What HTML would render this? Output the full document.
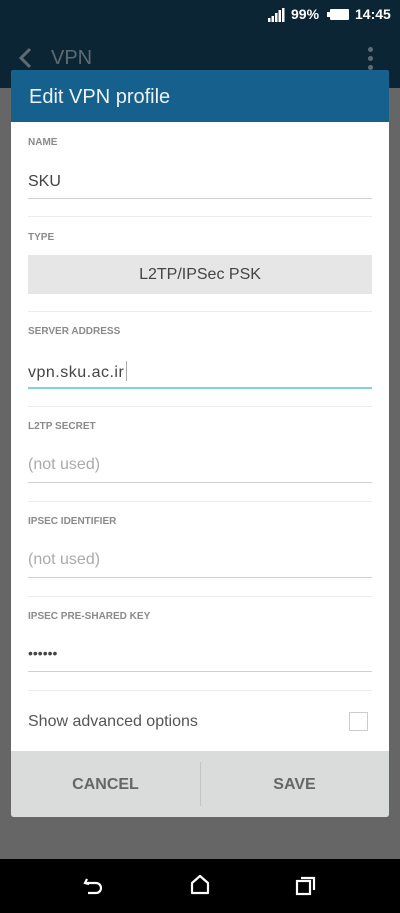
<!DOCTYPE html>
<html><head><meta charset="utf-8"><style>
*{margin:0;padding:0;box-sizing:border-box}
body{width:400px;height:913px;position:relative;overflow:hidden;background:#666;font-family:"Liberation Sans",sans-serif}
.top{position:absolute;left:0;top:0;width:400px;height:88px;background:#0b2535}
.nav{position:absolute;left:0;top:859px;width:400px;height:54px;background:#000}
.dlg{position:absolute;left:11px;top:70px;width:378px;height:747px;background:#fff;border-radius:3px;overflow:hidden}
.hd{height:52px;background:#15608d;color:#eef3f6;font-size:20px;line-height:54px;padding-left:18px}
.lbl{position:absolute;left:17px;font-size:10px;font-weight:bold;color:#8a8a8a}
.val{position:absolute;left:17px;font-size:16px;color:#444}
.ul{position:absolute;left:17px;width:344px;height:1px;background:#d0d0d0}
.dv{position:absolute;left:17px;width:344px;height:1px;background:#ececec}
.abs{position:absolute}
</style></head><body>
<div class="top">
<div class="abs" style="left:268px;top:8px;width:17px;height:14px">
<svg width="17" height="14"><rect x="0" y="10" width="2.5" height="4" fill="#fff"/><rect x="3.5" y="8" width="2.5" height="6" fill="#fff"/><rect x="7" y="5" width="2.5" height="9" fill="#fff"/><rect x="10.5" y="2" width="2.5" height="12" fill="#fff"/><rect x="14" y="0" width="2.5" height="14" fill="#fff"/></svg></div>
<div class="abs" style="left:291px;top:6px;color:#fff;font-size:14px;font-weight:bold">99%</div>
<div class="abs" style="left:330px;top:9px;width:19px;height:11px;border:1.5px solid #fff;background:#fff;border-radius:1px"></div>
<div class="abs" style="left:327px;top:12px;width:3px;height:5px;background:#fff"></div>
<div class="abs" style="left:355px;top:6px;color:#fff;font-size:14px;font-weight:bold">14:45</div>
<svg class="abs" style="left:18px;top:47px" width="14" height="22"><path d="M12 2 L3 11 L12 20" stroke="#5e6b73" stroke-width="3" fill="none"/></svg>
<div class="abs" style="left:51px;top:47px;color:#5e6b73;font-size:20px">VPN</div>
<div class="abs" style="left:368px;top:47px;width:5px;height:5px;border-radius:50%;background:#5e6b73;box-shadow:0 9px 0 #5e6b73,0 18px 0 #5e6b73"></div>
</div>
<div class="dlg">
<div class="hd">Edit VPN profile</div>
<div class="lbl" style="top:67px">NAME</div>
<div class="val" style="top:103px">SKU</div>
<div class="ul" style="top:128px"></div>
<div class="dv" style="top:146px"></div>
<div class="lbl" style="top:162px">TYPE</div>
<div class="abs" style="left:17px;top:185px;width:344px;height:39px;background:#e6e6e6;color:#444;font-size:16px;text-align:center;line-height:40px">L2TP/IPSec PSK</div>
<div class="dv" style="top:241px"></div>
<div class="lbl" style="top:256px">SERVER ADDRESS</div>
<div class="val" style="top:291px;letter-spacing:0.5px">vpn.sku.ac.ir<span style="display:inline-block;width:1px;height:20px;background:#aaa;vertical-align:-4px;margin-left:2px"></span></div>
<div class="ul" style="top:317px;background:#7fd3dd;height:1.5px"></div>
<div class="dv" style="top:336px"></div>
<div class="lbl" style="top:351px">L2TP SECRET</div>
<div class="val" style="top:386px;color:#aaa">(not used)</div>
<div class="ul" style="top:412px"></div>
<div class="dv" style="top:431px"></div>
<div class="lbl" style="top:446px">IPSEC IDENTIFIER</div>
<div class="val" style="top:481px;color:#aaa">(not used)</div>
<div class="ul" style="top:507px"></div>
<div class="dv" style="top:526px"></div>
<div class="lbl" style="top:541px">IPSEC PRE-SHARED KEY</div>
<div class="val" style="top:575px;font-size:14px;letter-spacing:0">••••••</div>
<div class="ul" style="top:601px"></div>
<div class="dv" style="top:620px"></div>
<div class="val" style="top:643px;color:#555">Show advanced options</div>
<div class="abs" style="left:338px;top:642px;width:19px;height:19px;border:1.5px solid #ccc"></div>
<div class="abs" style="left:0;top:681px;width:378px;height:66px;background:#d9dcdb">
<div class="abs" style="left:189px;top:11px;width:1px;height:44px;background:#c0c4c3"></div>
<div class="abs" style="left:0;top:1px;width:189px;height:66px;line-height:66px;text-align:center;font-weight:bold;font-size:16px;color:#666">CANCEL</div>
<div class="abs" style="left:189px;top:1px;width:189px;height:66px;line-height:66px;text-align:center;font-weight:bold;font-size:16px;color:#666">SAVE</div>
</div>
</div>
<div class="nav">
<svg class="abs" style="left:82px;top:16px" width="24" height="22"><path d="M5 4 L3 8 L7 9 M3 8 H14 a5 5 0 0 1 0 10 H6" stroke="#fff" stroke-width="2.2" fill="none"/></svg>
<svg class="abs" style="left:189px;top:15px" width="22" height="22"><path d="M3 19 V9 L11 2 L19 9 V19 Z" stroke="#fff" stroke-width="2.2" fill="none" stroke-linejoin="round"/></svg>
<svg class="abs" style="left:295px;top:16px" width="22" height="22"><rect x="2" y="6" width="13" height="13" stroke="#fff" stroke-width="2.2" fill="none"/><path d="M6 3 H19 V15" stroke="#fff" stroke-width="2.2" fill="none"/></svg>
</div>
</body></html>
